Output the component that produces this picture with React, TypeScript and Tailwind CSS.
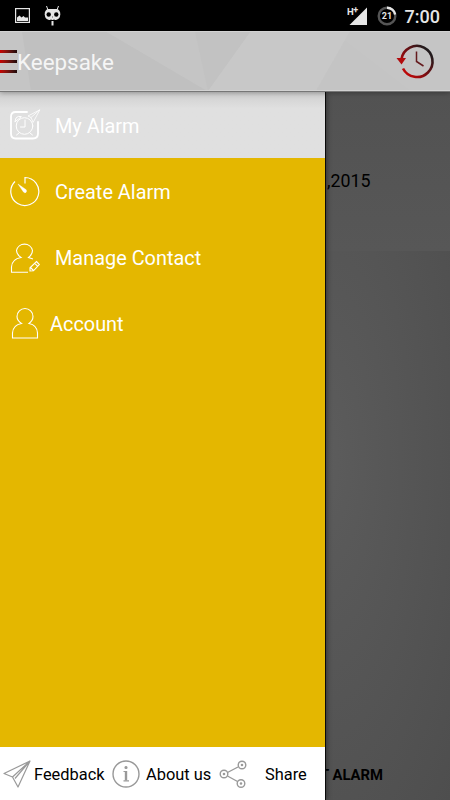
import React from 'react';

const MyAlarmIcon = () => (
  <svg className="h-8 w-8" viewBox="0 0 32 32" fill="none" stroke="white" strokeLinecap="round" strokeLinejoin="round">
    <path d="M18 3H6.500Q2 3 2 7.500V24.500Q2 29.500 6.500 29.500H24Q29 29.500 29 24.500V13" strokeWidth="1.800" />
    <circle cx="15.500" cy="17" r="8.300" strokeWidth="1" />
    <path d="M16 11V18H11.500" strokeWidth="1" />
    <path d="M6 12.500L7 9Q9 6.500 12 7.500ZM10 24L7.500 26M21 24L23.500 26" strokeWidth="1" />
    <path d="M30.500 1L19 7L22 8.500L24 13Z M30.500 1L22 8.500" strokeWidth=".8" />
  </svg>
);

const CreateAlarmIcon = () => (
  <svg className="h-8 w-8" viewBox="0 0 32 32" fill="none" stroke="white">
    <path d="M16 8.500V2.500A14 14 0 1 1 6 6.500" strokeWidth="1.200" />
    <path d="M9 9L17.200 14.800Q18 16.500 17 17.400Q15.600 18.200 14.500 17Z" fill="white" strokeWidth=".4" />
  </svg>
);

const ManageContactIcon = () => (
  <svg className="h-8 w-8" viewBox="0 0 32 32" fill="none" stroke="white" strokeWidth="1.100">
    <path d="M19 31.200H2.500V26Q3 18 12 16.500Q7.500 13.500 7.500 9.500A8.200 8.200 0 0 1 23.500 9.500Q23.500 13.500 19.500 16.500L24 18" />
    <path d="M27.500 20.500L30.300 23.500L24.500 29.800L21 30L21 26.800ZM21.500 26.500L24.500 29.500M25.800 22.300L28.500 25.200" />
  </svg>
);

const AccountIcon = () => (
  <svg className="h-8 w-8" viewBox="0 0 32 32" fill="none" stroke="white" strokeWidth="1.100">
    <path d="M3.500 31V26Q4 18 12.500 16.500Q8 13.500 8 9.500A8 8 0 0 1 24 9.500Q24 13.500 20 16.500Q28 18 28.500 26V31Z" />
  </svg>
);

const HistoryIcon = () => (
  <svg className="h-10 w-10" viewBox="0 0 40 40" fill="none">
    <defs>
      <linearGradient id="history" x1="8" y1="32" x2="32" y2="10" gradientUnits="userSpaceOnUse">
        <stop stopColor="#c40808" />
        <stop offset=".5" stopColor="#760e12" />
        <stop offset="1" stopColor="#211b1d" />
      </linearGradient>
    </defs>
    <path d="M6.500 19A15.600 15.600 0 1 1 8 28.500" stroke="url(#history)" strokeWidth="2.600" />
    <path d="M1.500 18H11L6.500 24.500Z" fill="#b20b0d" />
    <path d="M21.500 11.500V21.500L28.500 26" stroke="#651b1e" strokeWidth="1.500" />
  </svg>
);

const StatusBar = () => (
  <div className="flex h-[31px] items-center bg-black pl-[15px] pr-[10px] text-[#e6e6e6]">
    <svg className="h-[15px] w-[15px]" viewBox="0 0 15 15" fill="none">
      <rect x=".6" y=".6" width="13.800" height="13.800" stroke="currentColor" strokeWidth="1.200" />
      <path d="M2 13V9.500L4.500 7.500L6.500 9.500L8.500 8L10 9.500H13V13Z" fill="currentColor" />
    </svg>
    <svg className="ml-[14px] h-5 w-[17px]" viewBox="0 0 17 20">
      <path d="M2.500 0L4 4M14.500 0L13 4" stroke="currentColor" />
      <path d="M4 3H13Q16.500 4 16.300 8.500Q16 13 12 14H5Q1 13 .7 8.500Q.5 4 4 3Z" fill="currentColor" />
      <rect x="7.500" y="15" width="2" height="4.500" fill="currentColor" />
      <circle cx="4.700" cy="8.500" r="2.200" fill="black" />
      <circle cx="12.300" cy="8.500" r="2.200" fill="black" />
      <path d="M8 11H9M7 13V15M10 13V15" stroke="black" strokeWidth=".6" />
    </svg>
    <div className="ml-auto flex items-center">
      <svg className="h-5 w-[21px]" viewBox="0 0 21 20">
        <path d="M20 1.500V19H2.500Z" fill="currentColor" />
        <path d="M5 0H12.500V8L10 11H5Z" fill="black" />
        <g fill="currentColor" fontFamily="Roboto, sans-serif" fontWeight="700">
          <text x="0" y="9" fontSize="9.500">H</text>
          <text x="6.300" y="7" fontSize="9">+</text>
        </g>
      </svg>
      <svg className="ml-[9px] h-5 w-5" viewBox="0 0 20 20" fill="none">
        <circle cx="10" cy="10" r="8.300" stroke="#555" strokeWidth="2.400" />
        <path d="M10 1.700A8.300 8.300 0 0 1 18.200 8.500" stroke="currentColor" strokeWidth="2.400" />
        <text x="10" y="13.200" textAnchor="middle" fill="currentColor" fontFamily="Roboto, sans-serif" fontWeight="700" fontSize="9">21</text>
      </svg>
      <span className="ml-2 mt-[2px] text-[18px] font-medium leading-none">7:00</span>
    </div>
  </div>
);

const Header = () => (
  <header className="relative z-20 h-[61px] border-b border-[#777] bg-[#c5c5c5] shadow-[0_1px_5px_rgba(0,0,0,0.3)]">
    <svg className="absolute inset-0 h-full w-full" viewBox="0 0 450 60" preserveAspectRatio="none">
      <path d="M22 0H105L207 60H31Z" fill="#c0c0c0" />
      <path d="M105 0H195L208 60Z" fill="#c5c5c5" />
      <path d="M195 0H251L208 60Z" fill="#c2c2c2" />
      <path d="M251 0H350L316 60H208Z" fill="#c8c8c8" />
      <path d="M345 10L410 60H316Z" fill="#c4c4c4" />
      <path d="M0 .5H450M0 59.500H450" stroke="#d2d2d2" />
    </svg>
    <div className="relative flex h-full items-center pr-[15px]">
      <div className="flex w-[17px] flex-col gap-[7px]">
        <span className="h-[3px] bg-gradient-to-r from-[#c80000] to-[#210b0b]" />
        <span className="h-[3px] bg-gradient-to-r from-[#c80000] to-[#210b0b]" />
        <span className="h-[3px] bg-gradient-to-r from-[#c80000] to-[#210b0b]" />
      </div>
      <h1 className="pt-[3px] text-[22.4px] leading-none text-[#f5f5f5]">Keepsake</h1>
      <div className="mb-[2px] ml-auto">
        <HistoryIcon />
      </div>
    </div>
  </header>
);

const menu = [
  { label: 'My Alarm', Icon: MyAlarmIcon, row: 'bg-gradient-to-b from-[#cecece] via-[#e0e0e0] via-25% to-[#e0e0e0]', text: 'ml-[14px]' },
  { label: 'Create Alarm', Icon: CreateAlarmIcon, row: '', text: 'ml-[14px]' },
  { label: 'Manage Contact', Icon: ManageContactIcon, row: '', text: 'ml-[14px]' },
  { label: 'Account', Icon: AccountIcon, row: '', text: 'ml-[9px]' },
];

const App: React.FC = () => {
  return (
    <div className="flex h-[800px] w-[450px] flex-col overflow-hidden font-['Roboto',sans-serif]">
      <StatusBar />
      <Header />
      <main className="flex min-h-0 flex-1">
        {/* Navigation drawer */}
        <aside className="relative z-10 flex w-[325px] flex-col bg-[#e4b700] shadow-[1px_0_0_#090909,2px_0_5px_rgba(0,0,0,0.4)]">
          <nav>
            {menu.map(({ label, Icon, row, text }) => (
              <a key={label} href="#" className={`flex h-[66px] items-center pl-[9px] text-[19.9px] text-white ${row}`}>
                <Icon />
                <span className={`pt-[4px] ${text}`}>{label}</span>
              </a>
            ))}
          </nav>
          <div className="mt-auto flex h-[53px] items-center bg-white pl-[3px] text-[16.400px] text-black">
            <svg className="h-7 w-7" viewBox="0 0 28 28" fill="none" stroke="#999" strokeWidth="1.200" strokeLinejoin="round">
              <path d="M27 1L1 13.500L9.500 17L15 27ZM27 1L9.500 17M27 1L12 18.500" />
            </svg>
            <span className="ml-[3px] w-[78px] pt-[3px]">Feedback</span>
            <svg className="h-7 w-7" viewBox="0 0 28 28" fill="none" stroke="#999" strokeWidth="1.200">
              <circle cx="14" cy="14" r="13" strokeWidth="1.400" />
              <path d="M14 11V20.500" strokeWidth="2.400" />
              <path d="M11.500 11.500H14M11.500 20.800H17" />
              <circle cx="14" cy="7.500" r="1" fill="#999" />
            </svg>
            <span className="ml-[6px] w-[73px] pt-[3px]">About us</span>
            <svg className="h-7 w-7" viewBox="0 0 28 28" fill="none" stroke="#999" strokeWidth="1.400">
              <path d="M8.500 12.500L19 7M8.500 16L18.500 21.500" />
              <circle cx="5" cy="14" r="3.800" /><circle cx="5" cy="14" r=".6" fill="#999" />
              <circle cx="23" cy="5" r="3.800" /><circle cx="23" cy="5" r=".6" fill="#999" />
              <circle cx="22" cy="23.500" r="3.800" /><circle cx="22" cy="23.500" r=".6" fill="#999" />
            </svg>
            <span className="ml-[18px] pt-[3px]">Share</span>
          </div>
        </aside>
        {/* Dimmed page behind the drawer */}
        <section className="flex flex-1 flex-col bg-[#535353] text-black">
          <div className="h-[159px] bg-gradient-to-b from-[#525252] to-[#575757] pt-[76px] pl-[2px] text-[17.800px]">,2015</div>
          <div className="flex flex-1 items-end bg-[radial-gradient(ellipse_at_0%_38%,#5c5c5c,#4e4e4e)] pb-[14px] text-[14.800px] font-bold">
            <span className="-ml-[5px] whitespace-pre">T ALARM</span>
          </div>
        </section>
      </main>
    </div>
  );
};

export default App;
